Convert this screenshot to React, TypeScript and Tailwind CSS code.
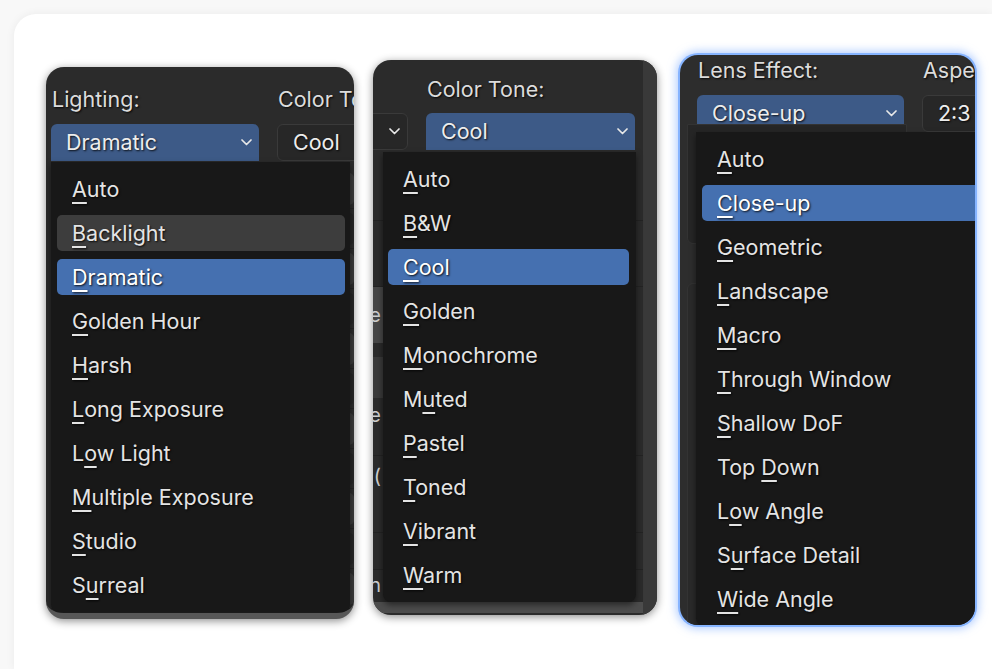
import React from 'react'

type Opt = { text: string; u: number }

const lighting: Opt[] = [
  { text: 'Auto', u: 0 },
  { text: 'Backlight', u: 0 },
  { text: 'Dramatic', u: 0 },
  { text: 'Golden Hour', u: 0 },
  { text: 'Harsh', u: 0 },
  { text: 'Long Exposure', u: 0 },
  { text: 'Low Light', u: 1 },
  { text: 'Multiple Exposure', u: 0 },
  { text: 'Studio', u: 0 },
  { text: 'Surreal', u: 1 },
]

const tones: Opt[] = [
  { text: 'Auto', u: 0 },
  { text: 'B&W', u: 0 },
  { text: 'Cool', u: 0 },
  { text: 'Golden', u: 0 },
  { text: 'Monochrome', u: 0 },
  { text: 'Muted', u: 1 },
  { text: 'Pastel', u: 0 },
  { text: 'Toned', u: 0 },
  { text: 'Vibrant', u: 0 },
  { text: 'Warm', u: 0 },
]

const lenses: Opt[] = [
  { text: 'Auto', u: 0 },
  { text: 'Close-up', u: 0 },
  { text: 'Geometric', u: 0 },
  { text: 'Landscape', u: 0 },
  { text: 'Macro', u: 0 },
  { text: 'Through Window', u: 0 },
  { text: 'Shallow DoF', u: 0 },
  { text: 'Top Down', u: 4 },
  { text: 'Low Angle', u: 1 },
  { text: 'Surface Detail', u: 1 },
  { text: 'Wide Angle', u: 0 },
]

const shadowText = '[text-shadow:1px_1px_2px_rgba(0,0,0,0.85)]'

function Mnemonic({ opt }: { opt: Opt }) {
  return (
    <span className="whitespace-pre">
      {opt.text.slice(0, opt.u)}
      <span className="underline decoration-[1.5px] underline-offset-[5px]">{opt.text[opt.u]}</span>
      {opt.text.slice(opt.u + 1)}
    </span>
  )
}

function Chevron() {
  return (
    <svg width="11" height="7" viewBox="0 0 11 7" className="shrink-0">
      <polyline points="1,1 5.5,5.5 10,1" fill="none" stroke="#e8e8e8" strokeWidth="1.7" strokeLinecap="round" strokeLinejoin="round" />
    </svg>
  )
}

function SelectButton({ value, active, width }: { value: string; active?: boolean; width: string }) {
  return (
    <div
      className={`${width} h-[37px] shrink-0 flex items-center justify-between pl-[15px] pr-[7px] ${
        active ? 'bg-[#3d5a87] rounded-t-[6px]' : 'bg-[#272727] border border-[#3a3a3a] rounded-[6px]'
      }`}
    >
      <span className={`text-[21.5px] text-[#ededed] whitespace-nowrap ${shadowText}`}>{value}</span>
      <Chevron />
    </div>
  )
}

function Menu({ items, selected, hover, className }: { items: Opt[]; selected: number; hover?: number; className: string }) {
  return (
    <div className={`absolute bg-[#181818] rounded-b-[8px] py-[5px] shadow-[0_3px_6px_rgba(0,0,0,0.5)] ${className}`}>
      {items.map((opt, i) => (
        <div key={opt.text} className="h-11 py-1">
          <div
            className={`h-9 rounded-[5px] pl-[15px] flex items-center whitespace-nowrap text-[21.5px] text-[#e4e4e4] ${shadowText} ${
              i === selected ? 'bg-[#4570b0] text-white' : i === hover ? 'bg-[#3d3d3d]' : ''
            }`}
          >
            <Mnemonic opt={opt} />
          </div>
        </div>
      ))}
    </div>
  )
}

function FieldRows({ count }: { count: number }) {
  return (
    <div className="flex flex-col">
      {Array.from({ length: count }).map((_, i) => (
        <div key={i} className="h-[40px] border-b border-[#232323] flex items-center gap-[18px]">
          <div className={`h-[32px] w-[208px] rounded-[5px] ${i % 3 === 1 ? 'bg-[#474747]' : 'bg-[#2f2f2f]'}`} />
          <div className={`h-[32px] w-[208px] rounded-[5px] ${i % 2 === 0 ? 'bg-[#3a3a3a]' : 'bg-[#262626]'}`} />
        </div>
      ))}
    </div>
  )
}

const labelCls = `h-[24px] leading-[24px] text-[21.5px] text-[#dcdcdc] whitespace-nowrap ${shadowText}`
const ghostText = 'flex items-center justify-end w-[208px] text-[20px] text-[#cfcfcf]'

export default function App() {
  return (
    <div className="w-[992px] h-[669px] overflow-hidden bg-[#f8f8f8] pl-[14px] pt-[14px] font-[Inter,'Noto_Sans',sans-serif]">
      <div className="w-full h-full bg-white rounded-tl-[22px] shadow-[0_0_10px_rgba(0,0,0,0.06)] flex items-start pl-[32px]">
        {/* Lighting panel */}
        <div className="relative mt-[53px] w-[308px] h-[552px] shrink-0 overflow-hidden rounded-[18px] bg-[#2b2b2b] border-b-[6px] border-[#575757] shadow-[0_2px_8px_rgba(0,0,0,0.45)]">
          <div className="flex gap-[18px] pl-[5px] pt-[20px]">
            <div className="w-[208px] shrink-0">
              <div className={`pl-[1px] ${labelCls}`}>Lighting:</div>
              <div className="mt-[13px]">
                <SelectButton value="Dramatic" active width="w-[208px]" />
              </div>
            </div>
            <div className="w-[208px] shrink-0">
              <div className={`pl-[1px] ${labelCls}`}>Color Tone:</div>
              <div className="mt-[13px]">
                <SelectButton value="Cool" width="w-[208px]" />
              </div>
            </div>
          </div>
          <div className="mt-[8px] pl-[5px]">
            <FieldRows count={11} />
          </div>
          <Menu items={lighting} selected={2} hover={1} className="left-[5px] top-[95px] w-[299px] pl-[6px] pr-[5px]" />
        </div>

        {/* Color tone panel */}
        <div className="relative ml-[19px] mt-[46px] w-[284px] h-[555px] shrink-0 overflow-hidden rounded-[18px] bg-[#2b2b2b] flex shadow-[0_2px_8px_rgba(0,0,0,0.45)]">
          <div className="w-[270px] shrink-0 flex flex-col">
            <div className="flex gap-[18px] -ml-[173px] pt-[17px]">
              <div className="w-[208px] shrink-0">
                <div className={labelCls}>Lighting:</div>
                <div className="mt-[12px]">
                  <SelectButton value="Dramatic" width="w-[208px]" />
                </div>
              </div>
              <div className="w-[209px] shrink-0">
                <div className={`pl-[1px] ${labelCls}`}>Color Tone:</div>
                <div className="mt-[12px]">
                  <SelectButton value="Cool" active width="w-[209px]" />
                </div>
              </div>
            </div>
            <div className="-ml-[200px] mt-[6px] flex-1 flex flex-col">
              <div className="h-[65px] border-b border-[#232323]" />
              <div className="h-[66px] border-b border-[#232323]" />
              <div className="h-[56px] w-[210px] bg-[#474747] flex items-center justify-end pr-[2px] text-[20px] text-[#cfcfcf]">Style</div>
              <div className="h-[14px]" />
              <div className="h-[41px] w-[210px] bg-[#3a3a3a]" />
              <div className={`h-[34px] ${ghostText}`}>Texture</div>
              <div className="h-[24px] border-b border-[#232323]" />
              <div className={`h-[40px] ${ghostText}`}>(</div>
              <div className="h-[37px] border-b border-[#232323]" />
              <div className="h-[37px] border-b border-[#232323]" />
              <div className={`h-[30px] ${ghostText}`}>Pattern</div>
              <div className="flex-1" />
              <div className="h-[11px] bg-[#4d4d4d] ml-[200px] mb-[2px]" />
            </div>
          </div>
          <div className="w-[14px] bg-[#393939]" />
          <Menu items={tones} selected={2} className="left-[10px] top-[92px] w-[253px] pl-[5px] pr-[7px]" />
        </div>

        {/* Lens effect panel */}
        <div className="relative ml-[23px] mt-[41px] w-[295px] h-[570px] shrink-0 overflow-hidden rounded-[18px] bg-[#2d2d2d] shadow-[0_0_0_2px_#86b4ff,0_0_9px_4px_rgba(120,170,255,0.55)]">
          <div className="flex gap-[18px] pl-[17px] pt-[3px]">
            <div className="w-[207px] shrink-0">
              <div className={`pl-[1px] ${labelCls}`}>Lens Effect:</div>
              <div className="mt-[13px]">
                <SelectButton value="Close-up" active width="w-[207px]" />
              </div>
            </div>
            <div className="w-[207px] shrink-0">
              <div className={`pl-[1px] ${labelCls}`}>Aspect Ratio:</div>
              <div className="mt-[13px]">
                <SelectButton value="2:3" width="w-[207px]" />
              </div>
            </div>
          </div>
          <div className="pl-[7px] mt-[-8px] flex flex-col gap-[39px]">
            <div className="h-[120px] w-[220px] rounded-b-[6px] bg-[#262626] border border-[#333]" />
            <div className="h-[380px] w-[220px] rounded-[6px] bg-[#2a2a2a] border border-[#333]" />
          </div>
          <Menu items={lenses} selected={1} className="left-[16px] top-[77px] w-[299px] pl-[6px] pr-[5px]" />
        </div>
      </div>
    </div>
  )
}
